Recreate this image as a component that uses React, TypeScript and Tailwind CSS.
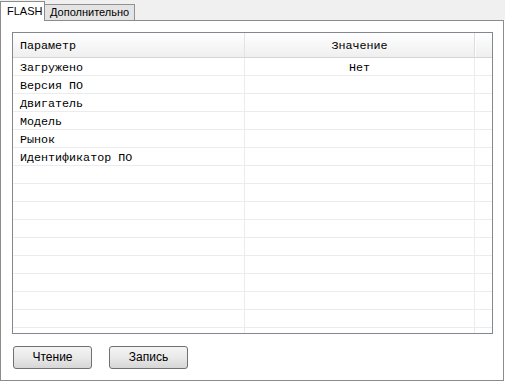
const rows = [
  "Загружено",
  "Версия ПО",
  "Двигатель",
  "Модель",
  "Рынок",
  "Идентификатор ПО",
];

const values: Record<string, string> = { Загружено: "Нет" };

const App = () => {
  const body = Array.from({ length: 16 }, (_, i) => rows[i] ?? "");

  return (
    <div className="w-[505px] h-[382px] bg-white font-['Liberation_Sans',Arial,sans-serif] text-black">
      {/* tabs */}
      <div className="flex items-end h-[20px] bg-[#f0f0f0] w-[505px]">
        <div className="relative z-10 -mb-px h-[20px] w-[45px] border-l border-t border-r border-[#8c8c8c] bg-white text-[11px] leading-[18px] pl-[6px]">
          FLASH
        </div>
        <div className="h-[16px] w-[90px] border-t border-r border-[#919191] bg-[#e4e4e4] text-[11px] leading-[15px] pl-[5px]">
          Дополнительно
        </div>
      </div>

      {/* panel */}
      <div className="w-[504px] h-[361px] border border-[#8c8c8c] bg-white pt-[11px] pl-[11px]">
        <div className="w-[481px] h-[302px] border border-[#828790] overflow-hidden font-['Liberation_Mono','Courier_New',monospace] text-[11.7px]">
          <div className="flex h-[25px] border-b border-[#d5d5d5] bg-gradient-to-b from-white to-[#efefef]">
            <div className="w-[232px] border-r border-[#e3e3e3] pl-[7px] pt-[2px] leading-[22px]">
              Параметр
            </div>
            <div className="w-[230px] border-r border-[#dcdcdc] text-center pt-[2px] leading-[22px]">
              Значение
            </div>
            <div className="flex-1 border-l border-white" />
          </div>
          {body.map((name, i) => (
            <div key={i} className="flex h-[18px] border-b border-[#ececec]">
              <div className="w-[232px] border-r border-[#ececec] pl-[7px] pt-[3px] leading-[14px]">
                {name}
              </div>
              <div className="w-[230px] border-r border-[#ececec] text-center pt-[3px] leading-[14px]">
                {values[name] ?? ""}
              </div>
              <div className="flex-1" />
            </div>
          ))}
        </div>

        <div className="flex gap-[17px] mt-[12px] ml-px">
          {["Чтение", "Запись"].map((label) => (
            <button
              key={label}
              className="w-[79px] h-[23px] rounded-[3px] border border-[#707070] bg-gradient-to-b from-[#f4f4f4] via-[#e9e9e9] to-[#d6d6d6] text-[12px] leading-[21px]"
            >
              {label}
            </button>
          ))}
        </div>
      </div>
    </div>
  );
};

export default App;
